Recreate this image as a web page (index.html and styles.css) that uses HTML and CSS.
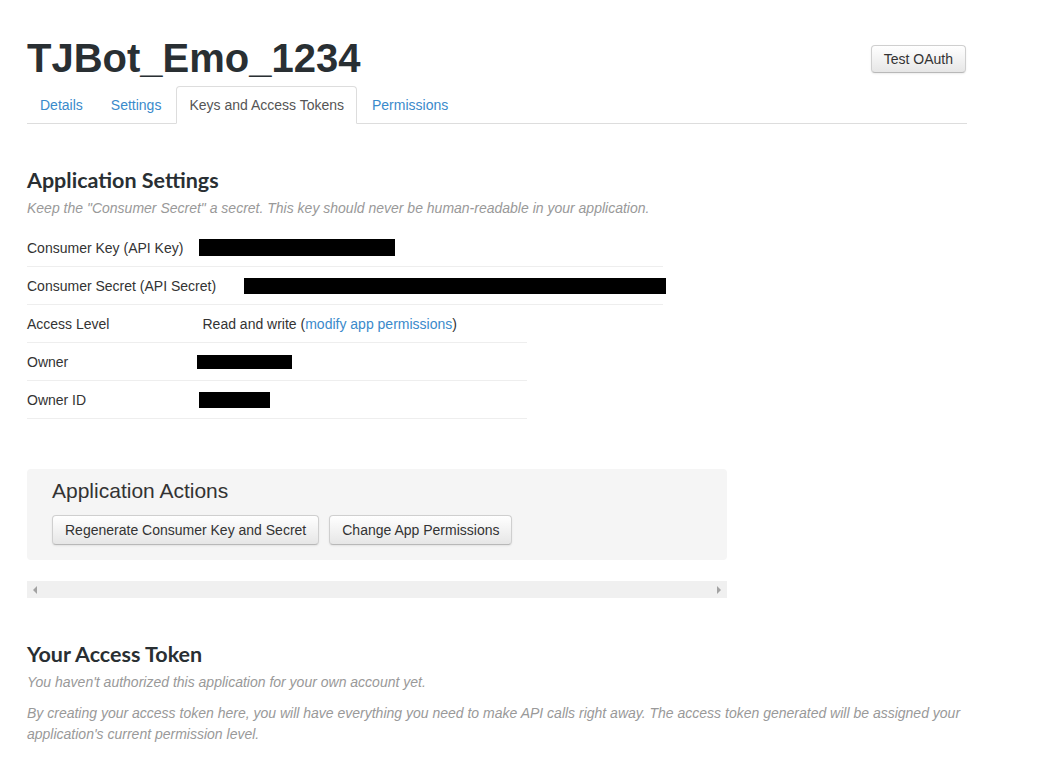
FILE: index.html
```html
<!DOCTYPE html>
<html>
<head>
<meta charset="utf-8">
<title>TJBot_Emo_1234</title>
<link rel="stylesheet" href="styles.css">
</head>
<body>
<div class="container">
  <div class="app-header">
    <h1 class="app-title">TJBot_Emo_1234</h1>
    <button class="btn btn-oauth">Test OAuth</button>
  </div>
  <ul class="tabs">
    <li class="tab"><a>Details</a></li>
    <li class="tab"><a>Settings</a></li>
    <li class="tab active"><a>Keys and Access Tokens</a></li>
    <li class="tab"><a>Permissions</a></li>
  </ul>

  <section class="section-settings">
    <h2 class="section-title">Application Settings</h2>
    <p class="hint">Keep the "Consumer Secret" a secret. This key should never be human-readable in your application.</p>
    <div class="rows rows-wide">
      <div class="row"><span class="label">Consumer Key (API Key)</span><span class="redact redact-key"></span></div>
      <div class="row"><span class="label">Consumer Secret (API Secret)</span><span class="redact redact-secret"></span></div>
    </div>
    <div class="rows rows-narrow">
      <div class="row"><span class="label">Access Level</span><span class="value value-access">Read and write (<a class="link">modify app permissions</a>)</span></div>
      <div class="row"><span class="label">Owner</span><span class="redact redact-owner"></span></div>
      <div class="row"><span class="label">Owner ID</span><span class="redact redact-ownerid"></span></div>
    </div>
  </section>

  <div class="actions">
    <h3 class="actions-title">Application Actions</h3>
    <div class="actions-buttons">
      <button class="btn">Regenerate Consumer Key and Secret</button>
      <button class="btn">Change App Permissions</button>
    </div>
  </div>

  <div class="hscroll">
    <span class="arrow arrow-left"></span>
    <span class="arrow arrow-right"></span>
  </div>

  <section class="section-token">
    <h2 class="section-title">Your Access Token</h2>
    <p class="hint">You haven't authorized this application for your own account yet.</p>
    <p class="hint">By creating your access token here, you will have everything you need to make API calls right away. The access token generated will be assigned your application's current permission level.</p>
  </section>
</div>
</body>
</html>
```

FILE: styles.css
```css
html, body {
  margin: 0;
  padding: 0;
  background: #fff;
}
body {
  font-family: "Liberation Sans", Arial, sans-serif;
  font-size: 14px;
  color: #333;
}
.container {
  width: 940px;
  margin-left: 27px;
  padding-top: 36px;
}
.app-header {
  display: flex;
  justify-content: space-between;
  align-items: flex-start;
}
.app-title {
  margin: 0;
  font-size: 40px;
  line-height: 44px;
  font-weight: bold;
  color: #292f33;
}
.btn {
  font-family: "Liberation Sans", Arial, sans-serif;
  font-size: 14px;
  line-height: 20px;
  color: #333;
  padding: 4px 12px;
  border: 1px solid #cfcfcf;
  border-bottom-color: #b8b8b8;
  border-radius: 4px;
  background: linear-gradient(#ffffff, #e6e6e6);
  box-shadow: inset 0 1px 0 rgba(255,255,255,.2), 0 1px 2px rgba(0,0,0,.08);
}
.btn-oauth {
  margin-top: 9px;
  margin-right: 1px;
  padding: 3px 12px;
}
.tabs {
  list-style: none;
  margin: 6px 0 0;
  padding: 0;
  display: flex;
  border-bottom: 1px solid #ddd;
}
.tab {
  margin-right: 2px;
  margin-bottom: -1px;
}
.tab a {
  display: block;
  padding: 8px 12px;
  line-height: 20px;
  border: 1px solid transparent;
  border-radius: 4px 4px 0 0;
  color: #3a8acb;
}
.tab.active a {
  color: #555;
  background: #fff;
  border-color: #ddd #ddd transparent;
}
.section-settings {
  margin-top: 43px;
}
.section-title {
  margin: 0 0 5px;
  font-family: Lato, "Liberation Sans", sans-serif;
  font-weight: 700;
  font-size: 21.5px;
  line-height: 26px;
  color: #292f33;
}
.hint {
  margin: 0 0 10px;
  line-height: 21px;
  font-style: italic;
  color: #999;
}
.rows-wide {
  width: 636px;
}
.rows-narrow {
  width: 500px;
}
.row {
  display: flex;
  align-items: center;
  height: 37px;
  border-bottom: 1px solid #eee;
}
.label {
  flex: none;
}
.redact {
  display: block;
  flex: none;
  background: #000;
}
.redact-key {
  margin-left: 16px;
  width: 196px;
  height: 17px;
}
.redact-secret {
  margin-left: 28px;
  width: 422px;
  height: 16px;
}
.value-access {
  margin-left: 93px;
}
.link {
  color: #3a8acb;
}
.redact-owner {
  margin-left: 129px;
  width: 95px;
  height: 14px;
}
.redact-ownerid {
  margin-left: 113px;
  width: 71px;
  height: 16px;
}
.actions {
  margin-top: 50px;
  width: 700px;
  box-sizing: border-box;
  background: #f5f5f5;
  border-radius: 4px;
  padding: 10px 25px 15px;
}
.actions-title {
  margin: 0;
  font-size: 21px;
  line-height: 24px;
  font-weight: normal;
  color: #333;
}
.actions-buttons {
  margin-top: 12px;
  display: flex;
  gap: 10px;
}
.hscroll {
  margin-top: 21px;
  width: 700px;
  height: 17px;
  background: #f0f0f0;
  display: flex;
  justify-content: space-between;
  align-items: center;
  padding: 0 6px;
  box-sizing: border-box;
}
.arrow {
  width: 0;
  height: 0;
  border-top: 4px solid transparent;
  border-bottom: 4px solid transparent;
}
.arrow-left {
  border-right: 4px solid #a3a3a3;
}
.arrow-right {
  border-left: 4px solid #a3a3a3;
}
.section-token {
  margin-top: 43px;
}
```
